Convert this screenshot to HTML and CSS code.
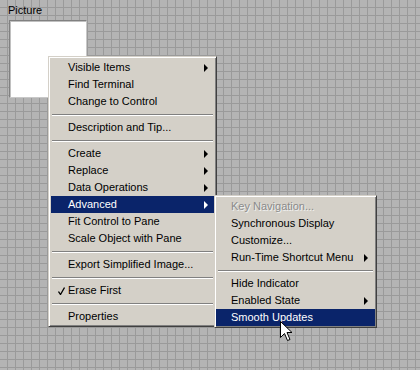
FILE: index.html
```html
<!DOCTYPE html>
<html lang="en">
<head>
  <meta charset="UTF-8">
  <title>Picture shortcut menu</title>
  <link rel="stylesheet" href="styles.css">
</head>
<body>
  <div class="panel">
    <div class="control">
      <div class="control-label">Picture</div>
      <div class="picture"></div>
    </div>

    <ul class="menu main-menu">
      <li class="item has-sub">Visible Items</li>
      <li class="item">Find Terminal</li>
      <li class="item">Change to Control</li>
      <li class="sep"></li>
      <li class="item">Description and Tip...</li>
      <li class="sep"></li>
      <li class="item has-sub">Create</li>
      <li class="item has-sub">Replace</li>
      <li class="item has-sub">Data Operations</li>
      <li class="item has-sub active">Advanced</li>
      <li class="item">Fit Control to Pane</li>
      <li class="item">Scale Object with Pane</li>
      <li class="sep"></li>
      <li class="item">Export Simplified Image...</li>
      <li class="sep"></li>
      <li class="item checked">
        <svg class="check" width="7" height="8" viewBox="0 0 7 8">
          <path d="M0.5 4.5 L2.5 7.5 L6.5 0.5" fill="none" stroke="#000" stroke-width="1.3"/>
        </svg>
        Erase First
      </li>
      <li class="sep"></li>
      <li class="item">Properties</li>
    </ul>

    <ul class="menu sub-menu">
      <li class="item disabled">Key Navigation...</li>
      <li class="item">Synchronous Display</li>
      <li class="item">Customize...</li>
      <li class="item has-sub">Run-Time Shortcut Menu</li>
      <li class="sep"></li>
      <li class="item">Hide Indicator</li>
      <li class="item has-sub">Enabled State</li>
      <li class="item active">Smooth Updates</li>
    </ul>

    <svg class="cursor" width="13" height="20" viewBox="0 0 13 20">
      <path d="M0.5 0.5 L0.5 16.5 L4.5 12.5 L7.5 19.5 L10 18.5 L7 11.5 L12 11.5 Z" fill="#fff" stroke="#000" stroke-width="1"/>
    </svg>
  </div>
</body>
</html>
```
FILE: styles.css
```css
body {
  margin: 0;
  font-family: 'Liberation Sans', Arial, sans-serif;
  font-size: 11px;
  color: #000;
}

/* front panel grid */
.panel {
  position: relative;
  width: 420px;
  height: 370px;
  overflow: hidden;
  background-color: #b4b4b4;
  background-image:
    linear-gradient(to right, #9a9a9a 1px, transparent 1px),
    linear-gradient(to bottom, #9a9a9a 1px, transparent 1px);
  background-size: 8px 8px;
  background-position: 7px 7px;
}

.control {
  position: absolute;
  left: 8px;
  top: 3px;
}

.control-label {
  line-height: 15px;
  height: 17px;
}

.picture {
  margin-left: 1px;
  width: 76px;
  height: 76px;
  background: #fff;
  border: 1px solid #808080;
  border-right-color: #c8c8c8;
  border-bottom-color: #c8c8c8;
  box-shadow: inset 1px 1px #c0c0c0;
}

/* classic menus */
.menu {
  position: absolute;
  margin: 0;
  padding: 2px 1px 1px 1px;
  list-style: none;
  background: #d4d0c8;
  border: 1px solid;
  border-color: #d4d0c8 #404040 #404040 #d4d0c8;
  box-shadow: inset 1px 1px #fff, inset -1px -1px #808080;
}

.main-menu {
  left: 48px;
  top: 56px;
  width: 165px;
}

.sub-menu {
  left: 214px;
  top: 195px;
  width: 159px;
}

.item {
  position: relative;
  display: flex;
  align-items: center;
  height: 17px;
  line-height: 17px;
  padding: 0 7px 0 17px;
  white-space: nowrap;
}

.sub-menu .item {
  padding-left: 15px;
}

.main-menu .item {
  margin-left: 1px;
}

.has-sub::after {
  content: "";
  margin-left: auto;
  border-left: 4px solid #000;
  border-top: 4px solid transparent;
  border-bottom: 4px solid transparent;
}

.active {
  background: #0a246a;
  color: #fff;
}

.active.has-sub::after {
  border-left-color: #fff;
}

.disabled {
  color: #8a8a8a;
  text-shadow: 1px 1px 0 #f0f0f0;
}

.check {
  position: absolute;
  left: 7px;
  top: 5px;
}

.sep {
  height: 0;
  margin: 4px 2px 3px 2px;
  border-top: 1px solid #808080;
  border-bottom: 1px solid #fff;
}

.cursor {
  position: absolute;
  left: 280px;
  top: 321px;
}
```
